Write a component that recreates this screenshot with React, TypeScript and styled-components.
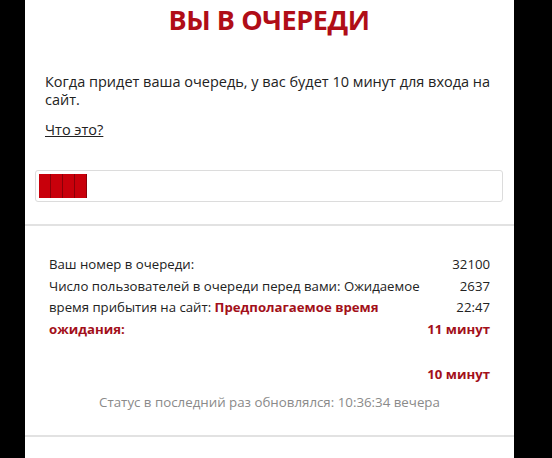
import React from 'react';
import styled, {createGlobalStyle} from 'styled-components';

const GlobalStyle = createGlobalStyle`
    html, body {
        margin: 0;
        padding: 0;
        background: #000;
    }
    body {
        font-family: "Open Sans", "Liberation Sans", sans-serif;
    }
`

const stats = [
    {value: '32100', red: false},
    {value: '2637', red: false},
    {value: '22:47', red: false},
    {value: '11 минут', red: true},
]

function App() {
    const blocks = 4;

    return (
        <>
            <GlobalStyle/>
            <Panel>
                <Intro>
                    <Title>ВЫ В ОЧЕРЕДИ</Title>
                    <Text>Когда придет ваша очередь, у вас будет 10 минут для входа на сайт.</Text>
                    <Link href="#">Что это?</Link>
                    <Progress>
                        {Array.from({length: blocks}).map((_, i) => <Block key={i}/>)}
                    </Progress>
                </Intro>
                <Divider/>
                <Stats>
                    <StatsGrid>
                        <Labels>
                            Ваш номер в очереди:<br/>
                            Число пользователей в очереди перед вами: Ожидаемое время прибытия на сайт:{' '}
                            <Strong>Предполагаемое время ожидания:</Strong>
                        </Labels>
                        <Values>
                            {stats.map(s => <Value key={s.value} $red={s.red}>{s.value}</Value>)}
                        </Values>
                    </StatsGrid>
                    <Remaining>10 минут</Remaining>
                    <Status>Статус в последний раз обновлялся: 10:36:34 вечера</Status>
                </Stats>
                <Divider/>
                <Footer/>
            </Panel>
        </>
    )
}

export default App;

const Panel = styled.div`
    width: 489px;
    margin-left: 25px;
    min-height: 458px;
    background: #fff;
    color: #222;
`
const Intro = styled.div`
    padding: 4px 11px 22px 10px;
`
const Title = styled.h1`
    margin: 0;
    text-align: center;
    color: #b00d17;
    font-size: 27px;
    font-weight: 700;
    line-height: 32px;
    letter-spacing: -0.4px;
`
const Text = styled.p`
    margin: 37px 0 0 10px;
    font-size: 14.5px;
    line-height: 18px;
`
const Link = styled.a`
    display: inline-block;
    margin: 12px 10px 0;
    font-size: 14.5px;
    line-height: 18px;
    color: #222;
    text-decoration: underline;
`
const Progress = styled.div`
    margin-top: 30px;
    height: 24px;
    padding: 3px;
    border: 1px solid #dcdcdc;
    border-radius: 3px;
    display: flex;
`
const Block = styled.div`
    width: 11px;
    height: 100%;
    background: #c8000b;
    border-right: 1px solid #8a0008;
`
const Divider = styled.div`
    height: 2px;
    background: #e2e2e2;
`
const Stats = styled.div`
    padding: 28px 24px 24px;
`
const StatsGrid = styled.div`
    display: grid;
    grid-template-columns: 1fr auto;
    font-size: 13.2px;
    line-height: 21.5px;
`
const Labels = styled.div`
    min-width: 0;
`
const Strong = styled.span`
    color: #a3101a;
    font-weight: 700;
`
const Values = styled.div`
    display: flex;
    flex-direction: column;
    align-items: flex-end;
    white-space: nowrap;
`
const Value = styled.div<{ $red: boolean }>`
    color: ${p => p.$red ? '#a3101a' : '#222'};
    font-weight: ${p => p.$red ? 700 : 400};
`
const Remaining = styled.div`
    margin-top: 24px;
    text-align: right;
    color: #a3101a;
    font-weight: 700;
    font-size: 13.2px;
    line-height: 21px;
`
const Status = styled.div`
    margin-top: 8px;
    text-align: center;
    color: #8a8a8a;
    font-size: 13.3px;
    line-height: 18px;
`
const Footer = styled.div`
    height: 20px;
`
